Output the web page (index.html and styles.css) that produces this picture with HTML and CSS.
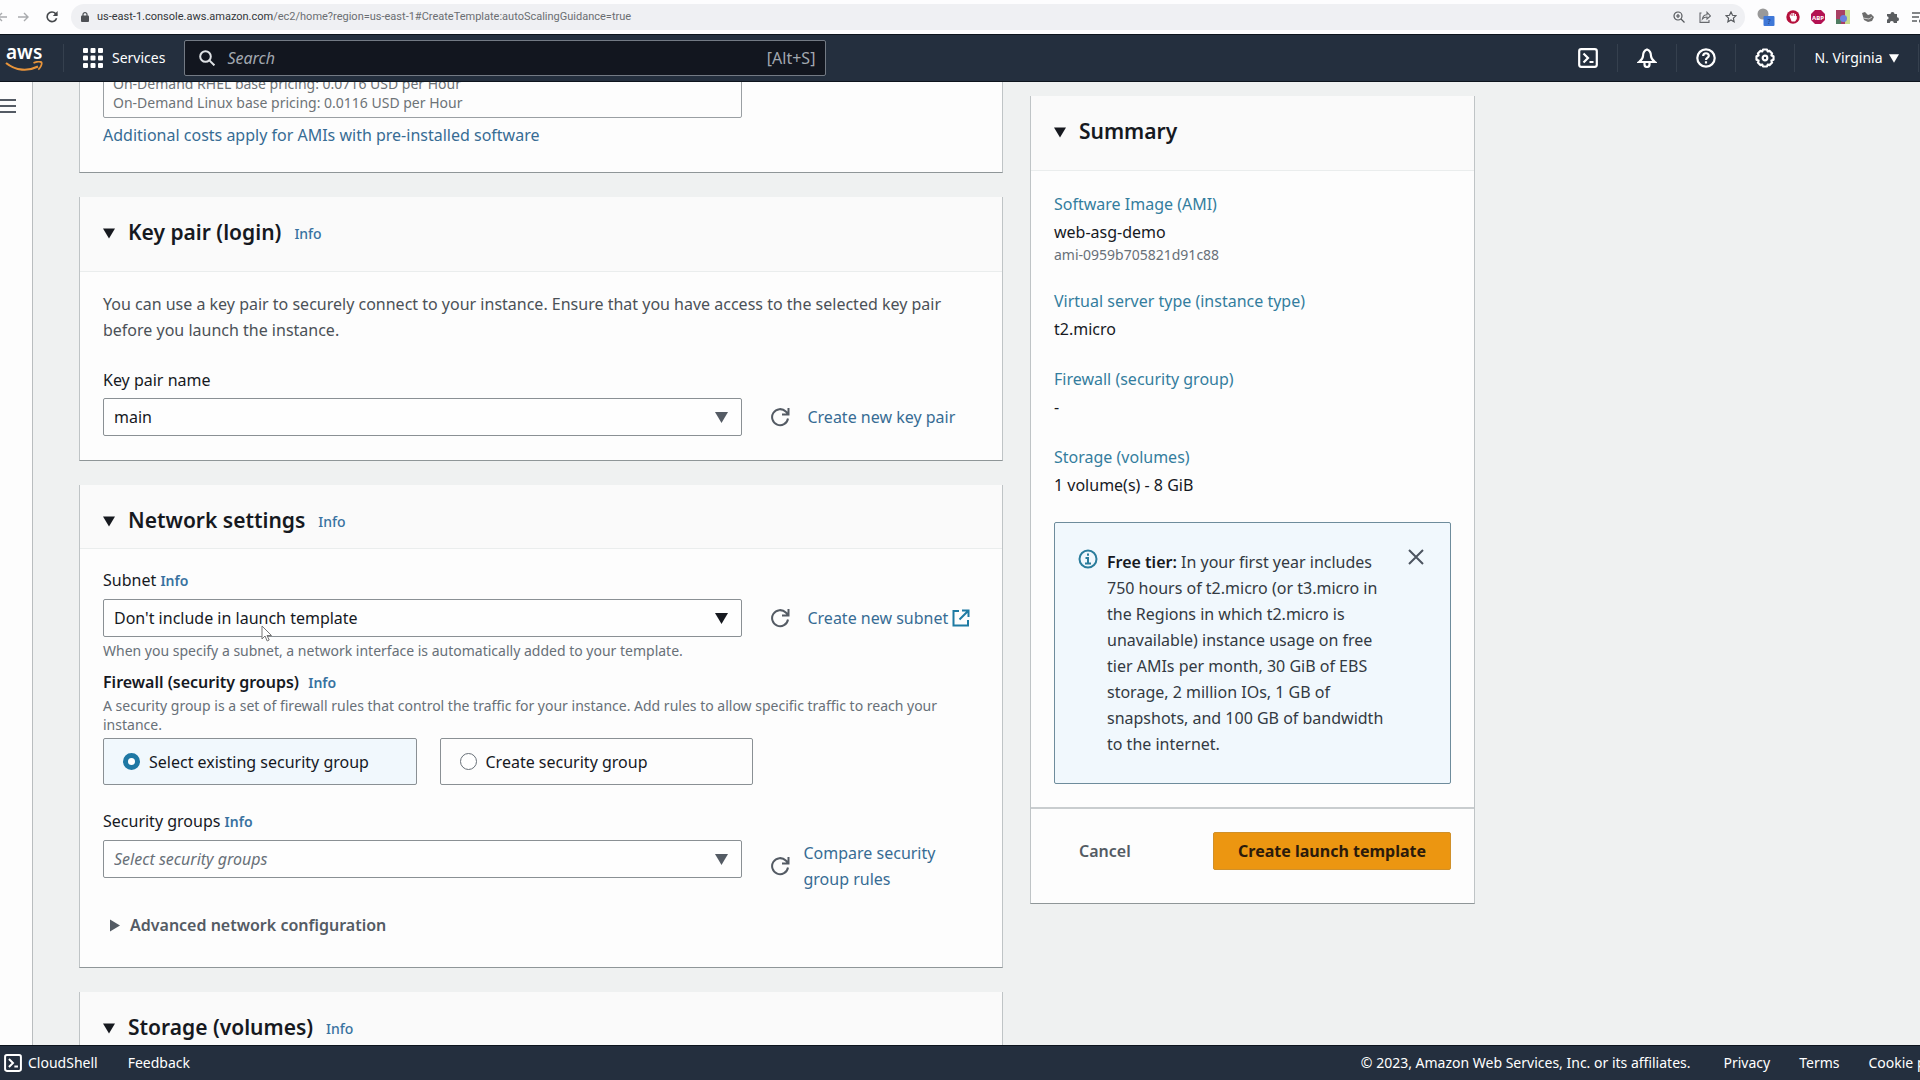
FILE: index.html
```html
<!DOCTYPE html>
<html lang="en">
<head>
  <meta charset="UTF-8">
  <meta name="viewport" content="width=device-width, initial-scale=1.0">
  <title>Create launch template | EC2 Management Console</title>
  <link rel="stylesheet" href="styles.css">
</head>
<body>
  <!-- shared shapes -->
  <svg class="defs" aria-hidden="true">
    <symbol id="caret-down" viewBox="0 0 12 10"><path d="M0 0h12L6 10z"/></symbol>
    <symbol id="caret-right" viewBox="0 0 10 12"><path d="M0 0v12l10-6z"/></symbol>
    <symbol id="refresh" viewBox="0 0 20 20">
      <path d="M18 11.500A8 8 0 1 1 15.800 4.500L18 6.700M18.500 1v6.500H12" fill="none" stroke="currentColor" stroke-width="2"/>
    </symbol>
    <symbol id="shell" viewBox="0 0 20 20">
      <rect x="1.2" y="1.2" width="17.6" height="17.6" rx="2" fill="none" stroke="currentColor" stroke-width="2.2"/>
      <path d="M5.5 5.5 10 10l-4.5 4.5M11.5 14h4" fill="none" stroke="currentColor" stroke-width="2.2"/>
    </symbol>
  </svg>

  <div class="browser-bar">
    <button class="browser-button" aria-label="Back">
      <svg width="12" height="12" viewBox="0 0 12 12"><path d="M11 6H2M6 2 2 6l4 4" fill="none" stroke="#a9abae" stroke-width="1.4"/></svg>
    </button>
    <button class="browser-button" aria-label="Forward">
      <svg width="12" height="12" viewBox="0 0 12 12"><path d="M0 6h10M6 2l4 4-4 4" fill="none" stroke="#a9abae" stroke-width="1.4"/></svg>
    </button>
    <button class="browser-button" aria-label="Reload">
      <svg width="12" height="12" viewBox="0 0 12 12"><path d="M10.6 7.2A4.8 4.8 0 1 1 9.6 2.6L10.8 4" fill="none" stroke="#45484c" stroke-width="1.6"/><path d="M11.6 0v5H6.8z" fill="#45484c"/></svg>
    </button>
    <div class="address">
      <svg width="8" height="10" viewBox="0 0 8 10"><path d="M2 4V2.6a2 2 0 0 1 4 0V4" fill="none" stroke="#4d5054" stroke-width="1.2"/><rect y="3.6" width="8" height="6.4" rx="1" fill="#4d5054"/></svg>
      <span class="url"><b>us-east-1.console.aws.amazon.com</b>/ec2/home?region=us-east-1#CreateTemplate:autoScalingGuidance=true</span>
      <div class="address-actions">
        <svg width="12" height="12" viewBox="0 0 12 12" fill="none" stroke="#55585c" stroke-width="1.2"><circle cx="5" cy="5" r="4"/><path d="M8 8l3.5 3.5M3 5h4M5 3v4"/></svg>
        <svg width="12" height="12" viewBox="0 0 12 12" fill="none" stroke="#66696d" stroke-width="1.1"><path d="M2.5 2H1v9.4h9V9M3.4 8c.4-3 2-4.200 4.600-4.300V1.300L11.400 5 8 8V6C6 6 4.600 6.500 3.400 8z"/></svg>
        <svg width="12" height="12" viewBox="0 0 12 12" fill="none" stroke="#55585c" stroke-width="1.2"><path d="M6 1l1.500 3.300 3.500.4-2.600 2.400.7 3.600L6 8.900l-3.100 1.800.7-3.600L1 4.700l3.500-.4z"/></svg>
      </div>
    </div>
    <div class="extensions">
      <svg width="18" height="18" viewBox="0 0 18 18"><circle cx="6" cy="6" r="5.500" fill="#999"/><rect x="6.500" y="8" width="11" height="10" rx="1" fill="#3f78d8"/><text x="12" y="16" font-size="7" text-anchor="middle" fill="#1c3d80">?</text></svg>
      <svg width="14" height="14" viewBox="0 0 14 14"><circle cx="7" cy="7" r="6.700" fill="#b5103c"/><path d="M4.300 7V4.500M6 6V3M7.700 6V3M9.400 6V4M4.300 6.500h5.900v2.300L8.800 11H6z" stroke="#fff" stroke-width="1.100" fill="#fff"/></svg>
      <svg width="14" height="14" viewBox="0 0 14 14"><path d="M4 0h6l4 4v6l-4 4H4l-4-4V4z" fill="#b31252"/><text x="7" y="9.500" font-size="6" font-weight="700" text-anchor="middle" fill="#fff">ABP</text></svg>
      <svg width="14" height="14" viewBox="0 0 14 14"><path d="M0 0h9v14H0z" fill="#a84064"/><path d="M0 9h5v5H0z" fill="#507d62"/><path d="M9 0h5v14H9z" fill="#c8dc8c"/><circle cx="7.500" cy="8.500" r="3.500" fill="#6b7fe0"/></svg>
      <svg width="14" height="14" viewBox="0 0 14 14"><path d="M1 3l3-1 3 3 3-1 3 3-2 4-4 1-4-2z" fill="#6d6d6d"/><path d="M2 8l6 1 3-2" stroke="#ccc" fill="none"/></svg>
      <svg width="14" height="14" viewBox="0 0 14 14"><path d="M1 4h3.500a2 2 0 1 1 4 0H11v3.200a2 2 0 1 1 0 4V13H7.800a2 2 0 0 0-4 0H1V9.500a1.600 1.600 0 0 0 0-3.200z" fill="#5a5d60"/></svg>
      <svg width="14" height="14" viewBox="0 0 14 14"><path d="M1 3h11M1 7h7M1 11h5" stroke="#5a5d60" stroke-width="1.300"/><circle cx="10" cy="11" r="2" fill="#5a5d60"/></svg>
    </div>
  </div>

  <header class="navbar">
    <a href="#" class="logo" aria-label="AWS home">
      <span>aws</span>
      <svg width="38" height="11" viewBox="0 0 38 11"><path d="M1 2c10 8 22 8.500 32 3.500" fill="none" stroke="#e8943a" stroke-width="2.200"/><path d="M28.500 2c3-1.500 7-1.800 8-.6.700 1.500-.7 5-3.200 7.300" fill="none" stroke="#e8943a" stroke-width="1.800"/></svg>
    </a>
    <button class="services">
      <svg width="20" height="20" viewBox="0 0 20 20" fill="#fff"><rect width="5" height="5" rx="1"/><rect x="7.500" width="5" height="5" rx="1"/><rect x="15" width="5" height="5" rx="1"/><rect y="7.500" width="5" height="5" rx="1"/><rect x="7.500" y="7.500" width="5" height="5" rx="1"/><rect x="15" y="7.500" width="5" height="5" rx="1"/><rect y="15" width="5" height="5" rx="1"/><rect x="7.500" y="15" width="5" height="5" rx="1"/><rect x="15" y="15" width="5" height="5" rx="1"/></svg>
      Services
    </button>
    <div class="search">
      <svg width="16" height="16" viewBox="0 0 16 16" fill="none" stroke="#dfe2e5" stroke-width="2"><circle cx="6.500" cy="6.500" r="5.300"/><path d="M10.400 10.400l5 5"/></svg>
      <input type="search" placeholder="Search" aria-label="Search">
      <span>[Alt+S]</span>
    </div>
    <div class="nav-tools">
      <button class="nav-tool" aria-label="CloudShell"><svg width="20" height="20"><use href="#shell"/></svg></button>
      <button class="nav-tool" aria-label="Notifications">
        <svg width="20" height="20" viewBox="0 0 20 20" fill="none" stroke="#fff" stroke-width="2.200"><path d="M10 1.500C7 2.500 6 5 6 8c0 2.800-1.600 4-4 6h16c-2.400-2-4-3.200-4-6 0-3-1-5.500-4-6.500zM7.500 15v1.500a2.500 2.500 0 0 0 5 0V15"/></svg>
      </button>
      <button class="nav-tool" aria-label="Help">
        <svg width="20" height="20" viewBox="0 0 20 20" fill="none" stroke="#fff" stroke-width="2.200"><circle cx="10" cy="10" r="8.700"/><path d="M7.200 8c0-3.700 5.600-3.500 5.600-.3C12.800 9.600 10 9.500 10 12M10 13.300v2.100"/></svg>
      </button>
      <button class="nav-tool" aria-label="Settings">
        <svg width="20" height="20" viewBox="0 0 20 20" fill="none" stroke="#fff" stroke-width="2.200" stroke-linejoin="round"><path d="M8 1.500h4l.7 2 2-.6 2.400 2.500-.7 2 2.100.9v3.400l-2.100.9.7 2-2.400 2.500-2-.6-.7 2H8l-.7-2-2 .6-2.400-2.500.7-2-2.100-.9V8.300l2.100-.9-.7-2 2.400-2.500 2 .6z"/><circle cx="10" cy="10" r="2.300"/></svg>
      </button>
      <button class="region">N. Virginia <svg width="10" height="9"><use href="#caret-down"/></svg></button>
    </div>
  </header>

  <main class="main">
    <aside class="side-rail">
      <button aria-label="Open navigation">
        <svg width="16" height="16" viewBox="0 0 16 16" stroke="#545b64" stroke-width="2"><path d="M0 2h16M0 8h16M0 14h16"/></svg>
      </button>
    </aside>

    <div class="content">
      <form class="form-column" id="templateForm">
        <section class="card scrolled-card">
          <div class="price-box">
            On-Demand RHEL base pricing: 0.0716 USD per Hour<br>
            On-Demand Linux base pricing: 0.0116 USD per Hour
          </div>
          <a href="#" class="link">Additional costs apply for AMIs with pre-installed software</a>
        </section>

        <section class="card">
          <div class="card-header card-header-tall">
            <svg class="caret" width="12" height="11"><use href="#caret-down"/></svg>
            <h2>Key pair (login)</h2>
            <a href="#" class="info">Info</a>
          </div>
          <div class="card-body">
            <p class="intro">You can use a key pair to securely connect to your instance. Ensure that you have access to the selected key pair before you launch the instance.</p>
            <label class="field-label" for="keyPair">Key pair name</label>
            <div class="field-row">
              <div class="select-box">
                <select id="keyPair"><option>main</option></select>
                <svg class="select-caret" width="13" height="11"><use href="#caret-down"/></svg>
              </div>
              <button type="button" class="refresh" aria-label="Refresh key pairs"><svg width="20" height="20"><use href="#refresh"/></svg></button>
              <a href="#" class="link">Create new key pair</a>
            </div>
          </div>
        </section>

        <section class="card">
          <div class="card-header">
            <svg class="caret" width="12" height="11"><use href="#caret-down"/></svg>
            <h2>Network settings</h2>
            <a href="#" class="info">Info</a>
          </div>
          <div class="card-body card-body-network">
            <div class="field-label"><label for="subnet">Subnet</label> <a href="#" class="info info-bold">Info</a></div>
            <div class="field-row">
              <div class="select-box">
                <select id="subnet"><option>Don't include in launch template</option></select>
                <svg class="select-caret dark" width="13" height="11"><use href="#caret-down"/></svg>
                <svg class="pointer" width="12" height="17" viewBox="0 0 12 17"><path d="M1 1v13l3-3 2.200 5 2-1L6 10.500h4.500z" fill="#fff" stroke="#777" stroke-width="1"/></svg>
              </div>
              <button type="button" class="refresh" aria-label="Refresh subnets"><svg width="20" height="20"><use href="#refresh"/></svg></button>
              <a href="#" class="link">Create new subnet
                <svg width="18" height="18" viewBox="0 0 18 18" fill="none" stroke="#1f7ba3" stroke-width="2"><path d="M7 2H1.500v14.500H16V11M10 1.500h6.500V8M16.500 1.500 7.500 10.500"/></svg></a>
            </div>
            <p class="hint">When you specify a subnet, a network interface is automatically added to your template.</p>

            <h3>Firewall (security groups) <a href="#" class="info info-bold">Info</a></h3>
            <p class="hint firewall-hint">A security group is a set of firewall rules that control the traffic for your instance. Add rules to allow specific traffic to reach your instance.</p>
            <div class="tiles">
              <label class="tile selected"><input type="radio" name="firewall" checked>Select existing security group</label>
              <label class="tile"><input type="radio" name="firewall">Create security group</label>
            </div>

            <div class="field-label"><label for="securityGroups">Security groups</label> <a href="#" class="info info-bold">Info</a></div>
            <div class="field-row field-row-top">
              <div class="select-box">
                <select id="securityGroups" class="placeholder"><option>Select security groups</option></select>
                <svg class="select-caret" width="13" height="11"><use href="#caret-down"/></svg>
              </div>
              <button type="button" class="refresh" aria-label="Refresh security groups"><svg width="20" height="20"><use href="#refresh"/></svg></button>
              <a href="#" class="link compare">Compare security group rules</a>
            </div>
            <button type="button" class="advanced"><svg width="10" height="13"><use href="#caret-right"/></svg>Advanced network configuration</button>
          </div>
        </section>

        <section class="card">
          <div class="card-header">
            <svg class="caret" width="12" height="11"><use href="#caret-down"/></svg>
            <h2>Storage (volumes)</h2>
            <a href="#" class="info">Info</a>
          </div>
        </section>
      </form>

      <aside class="card summary">
        <div class="card-header card-header-tall">
          <svg class="caret" width="12" height="11"><use href="#caret-down"/></svg>
          <h2>Summary</h2>
        </div>
        <div class="summary-body">
          <div class="summary-item">
            <a href="#">Software Image (AMI)</a>
            <p>web-asg-demo</p>
            <small>ami-0959b705821d91c88</small>
          </div>
          <div class="summary-item">
            <a href="#">Virtual server type (instance type)</a>
            <p>t2.micro</p>
          </div>
          <div class="summary-item">
            <a href="#">Firewall (security group)</a>
            <p>-</p>
          </div>
          <div class="summary-item">
            <a href="#">Storage (volumes)</a>
            <p>1 volume(s) - 8 GiB</p>
          </div>
          <div class="alert">
            <svg width="20" height="20" viewBox="0 0 20 20" fill="none" stroke="#2b7d9c" stroke-width="2"><circle cx="10" cy="10" r="8.500"/><path d="M10 4.500v2.200M7.500 9H10v5.500M7 14.500h6"/></svg>
            <p><b>Free tier:</b> In your first year includes 750 hours of t2.micro (or t3.micro in the Regions in which t2.micro is unavailable) instance usage on free tier AMIs per month, 30 GiB of EBS storage, 2 million IOs, 1 GB of snapshots, and 100 GB of bandwidth to the internet.</p>
            <button aria-label="Dismiss"><svg width="16" height="16" viewBox="0 0 16 16" stroke="#4d5560" stroke-width="2"><path d="M1 1l14 14M15 1 1 15"/></svg></button>
          </div>
        </div>
        <div class="summary-footer">
          <button class="cancel">Cancel</button>
          <button class="create" type="submit" form="templateForm">Create launch template</button>
        </div>
      </aside>
    </div>
  </main>

  <footer class="footer">
    <button class="footer-shell"><svg width="18" height="18"><use href="#shell"/></svg>CloudShell</button>
    <a href="#">Feedback</a>
    <div class="footer-legal">
      <span>© 2023, Amazon Web Services, Inc. or its affiliates.</span>
      <a href="#">Privacy</a>
      <a href="#">Terms</a>
      <a href="#">Cookie preferences</a>
    </div>
  </footer>
</body>
</html>
```
FILE: styles.css
```css
* {
  box-sizing: border-box;
}

body {
  margin: 0;
  height: 100vh;
  display: flex;
  flex-direction: column;
  overflow: hidden;
  font-family: "Noto Sans", "Open Sans", sans-serif;
  font-size: 16px;
  line-height: 26px;
  color: #16191f;
  background-color: #eff1f1;
}

h2, h3, p {
  margin: 0;
}

a {
  text-decoration: none;
}

button {
  padding: 0;
  border: none;
  background: none;
  font: inherit;
  color: inherit;
  cursor: pointer;
}

svg {
  flex: none;
}

use {
  fill: currentColor;
}

.defs {
  position: absolute;
  width: 0;
  height: 0;
}

/* browser bar */
.browser-bar {
  flex: none;
  height: 34px;
  display: flex;
  align-items: center;
  background-color: #fdfdfe;
  overflow: hidden;
}

.browser-button {
  width: 25px;
  height: 26px;
  display: flex;
  align-items: center;
}

.browser-button:first-child {
  width: 22px;
  margin-left: -4px;
}

.browser-button:nth-child(2) {
  width: 28px;
}

.address {
  flex: 1;
  height: 26px;
  padding: 0 8px 0 10px;
  display: flex;
  align-items: center;
  gap: 8px;
  border-radius: 13px;
  background-color: #eff0f3;
}

.url {
  font-family: Roboto, sans-serif;
  font-size: 11px;
  color: #6b6e72;
  white-space: nowrap;
}

.url b {
  font-weight: 400;
  color: #333639;
}

.address-actions {
  margin-left: auto;
  display: flex;
  gap: 14px;
}

.extensions {
  margin: 0 -5px 0 12px;
  display: flex;
  align-items: center;
  gap: 11px;
}

/* aws navigation */
.navbar {
  flex: none;
  height: 48px;
  display: flex;
  align-items: center;
  border-top: 1px solid #0d141d;
  border-bottom: 1px solid #0d141d;
  background-color: #242f3e;
  color: #ffffff;
  font-size: 14px;
}

.logo {
  width: 64px;
  height: 28px;
  padding-left: 5px;
  display: flex;
  flex-direction: column;
  border-right: 1px solid #35404e;
  color: #ffffff;
}

.logo span {
  padding-left: 1px;
  font-size: 19px;
  font-weight: 600;
  line-height: 17px;
}

.services {
  padding: 0 19px;
  display: flex;
  align-items: center;
  gap: 9px;
}

.search {
  flex: 0 1 642px;
  height: 36px;
  padding: 0 10px 0 14px;
  display: flex;
  align-items: center;
  gap: 12px;
  border: 1px solid #737a84;
  border-radius: 2px;
  background-color: #12161f;
  color: #a2a8b0;
  font-size: 16px;
}

.search input {
  flex: 1;
  min-width: 0;
  padding: 0;
  border: none;
  outline: none;
  background: none;
  font: inherit;
  color: #ffffff;
}

.search input::placeholder {
  color: #a2a8b0;
  font-style: italic;
}

.nav-tools {
  margin-left: auto;
  display: flex;
  align-items: center;
}

.nav-tool,
.region {
  height: 28px;
  display: flex;
  align-items: center;
  justify-content: center;
  border-right: 1px solid #35404e;
}

.nav-tool {
  width: 59px;
}

.region {
  width: 124px;
  gap: 6px;
  margin-right: 1px;
}

/* page */
.main {
  flex: 1;
  min-height: 0;
  display: flex;
  overflow: hidden;
}

.side-rail {
  flex: none;
  width: 33px;
  padding-top: 16px;
  border-right: 1px solid #b9bdbf;
  background-color: #fdfdfd;
}

.side-rail button,
.side-rail svg {
  display: block;
}

.content {
  flex: 1;
  max-width: 1442px;
  padding-left: 46px;
  display: grid;
  grid-template-columns: 924fr 445fr;
  align-items: start;
  gap: 27px;
}

.form-column {
  display: flex;
  flex-direction: column;
  gap: 24px;
}

.card {
  border: 1px solid #bfc4c6;
  border-top: none;
  border-bottom-color: #8f9698;
  background-color: #fdfdfd;
}

/* the form is scrolled, only the end of this card shows */
.scrolled-card {
  margin-top: -13px;
  padding: 0 23px 24px;
}

.price-box {
  width: 73%;
  margin-bottom: 4px;
  padding: 4px 9px 5px;
  border: 1px solid #9a9fa3;
  border-radius: 2px;
  font-size: 14px;
  line-height: 19px;
  color: #6d7377;
}

.card-header {
  height: 64px;
  padding: 18px 23px 0;
  display: flex;
  align-items: flex-start;
  border-bottom: 1px solid #eaeded;
  background-color: #fafafa;
}

.card-header-tall {
  height: 75px;
}

.card-header .caret {
  margin: 13px 13px 0 0;
}

.card-header h2 {
  font-size: 21px;
  font-weight: 600;
  line-height: 34px;
}

.card-header .info {
  margin: 1px 0 0 13px;
  line-height: 36px;
}

.card-body {
  padding: 19px 23px 24px;
}

.card-body-network {
  padding: 18px 23px 29px;
}

.intro {
  margin-bottom: 24px;
  color: #4b5157;
}

.link {
  color: #376c94;
}

.info {
  font-size: 14px;
  font-weight: 500;
  color: #3872a0;
}

.info-bold {
  font-weight: 600;
}

.field-label {
  display: block;
  margin-bottom: 5px;
}

.field-row {
  display: flex;
  align-items: center;
}

.field-row-top {
  align-items: flex-start;
}

.select-box {
  position: relative;
  width: 73%;
}

.select-box select {
  display: block;
  width: 100%;
  height: 38px;
  padding: 0 36px 0 10px;
  appearance: none;
  border: 1px solid #8a9094;
  border-radius: 2px;
  background-color: #fefefe;
  font: inherit;
  color: #16191f;
}

.select-box .placeholder {
  font-style: italic;
  color: #687078;
}

.select-caret {
  position: absolute;
  right: 14px;
  top: 14px;
  color: #545b64;
  pointer-events: none;
}

.select-caret.dark {
  color: #16191f;
}

.pointer {
  position: absolute;
  left: 158px;
  top: 26px;
}

.refresh {
  height: 20px;
  margin: 0 17px 0 28px;
  color: #545b64;
}

.refresh svg,
.alert button svg {
  display: block;
}

.field-row-top .refresh {
  margin: 16px 13px 0 28px;
}

.link svg {
  vertical-align: -3px;
}

.compare {
  max-width: 150px;
}

.hint {
  margin-top: 4px;
  font-size: 14px;
  line-height: 19px;
  color: #687078;
}

.firewall-hint {
  margin-top: 0;
}

h3 {
  margin-top: 9px;
  font-size: 16px;
  font-weight: 600;
}

h3 .info {
  margin-left: 5px;
}

.tiles {
  max-width: 650px;
  margin: 4px 0 23px;
  display: grid;
  grid-template-columns: 1fr 1fr;
  gap: 23px;
}

.tile {
  height: 47px;
  padding-left: 19px;
  display: flex;
  align-items: center;
  gap: 9px;
  border: 1px solid #8a9094;
  border-radius: 2px;
}

.tile.selected {
  background-color: #f1f8fd;
}

.tile input {
  width: 17px;
  height: 17px;
  margin: 0;
  appearance: none;
  border: 1px solid #687078;
  border-radius: 50%;
  background-color: #ffffff;
}

.tile input:checked {
  border: 5px solid #1f78a4;
}

.advanced {
  margin: 20px 0 0 7px;
  display: flex;
  align-items: center;
  gap: 10px;
  font-weight: 600;
  color: #545b64;
}

/* summary */
.summary {
  margin-top: 14px;
}

.summary-body {
  padding: 20px 23px 23px;
}

.summary-item {
  margin-bottom: 24px;
}

.summary-item a {
  display: block;
  margin-bottom: 2px;
  color: #347d9e;
}

.summary-item small {
  display: block;
  font-size: 14px;
  line-height: 19px;
  color: #687078;
}

.alert {
  padding: 26px 26px 26px 23px;
  display: flex;
  align-items: flex-start;
  gap: 9px;
  border: 1px solid #6e8c9c;
  border-radius: 2px;
  background-color: #f1f8fd;
}

.alert p {
  flex: 1;
  padding-right: 8px;
  color: #333a42;
}

.alert b {
  font-weight: 600;
  color: #16191f;
}

.summary-footer {
  padding: 23px 23px 33px 48px;
  display: flex;
  align-items: center;
  justify-content: space-between;
  border-top: 2px solid #c9cdcf;
  font-weight: 600;
}

.cancel {
  color: #545b64;
}

.create {
  height: 38px;
  padding: 0 24px;
  border: 1px solid #d0902a;
  border-radius: 2px;
  background-color: #ec9611;
  font-weight: 700;
  color: #2b1a0b;
}

/* footer */
.footer {
  flex: none;
  height: 35px;
  padding-left: 4px;
  display: flex;
  align-items: center;
  gap: 30px;
  border-top: 1px solid #0d141d;
  background-color: #242f3e;
  color: #ffffff;
  font-size: 14px;
  white-space: nowrap;
}

.footer a {
  color: #ffffff;
}

.footer-shell {
  display: flex;
  align-items: center;
  gap: 6px;
}

.footer-legal {
  margin: 0 -75px 0 auto;
  display: flex;
  gap: 29px;
}

.footer-legal span {
  margin-right: 4px;
}
```
